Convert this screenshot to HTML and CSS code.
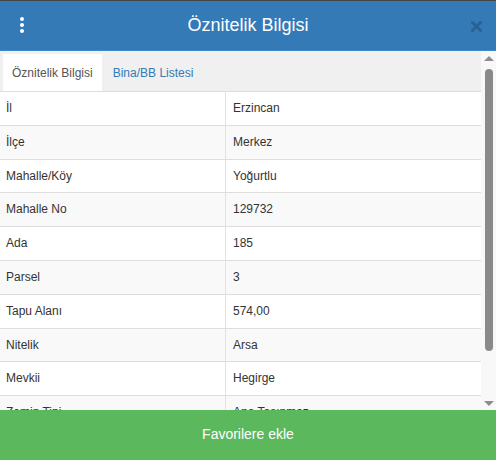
FILE: index.html
```html
<!DOCTYPE html>
<html lang="tr">
<head>
<meta charset="utf-8">
<title>Öznitelik Bilgisi</title>
<link rel="stylesheet" href="styles.css">
</head>
<body>
<div class="dialog">
  <header class="header">
    <div class="menu">
      <svg width="4" height="16" viewBox="0 0 4 16"><circle cx="2" cy="2" r="2" fill="#fff"/><circle cx="2" cy="8" r="2" fill="#fff"/><circle cx="2" cy="14" r="2" fill="#fff"/></svg>
    </div>
    <h1 class="title">Öznitelik Bilgisi</h1>
    <div class="close">
      <svg width="11" height="11" viewBox="0 0 11 11"><path d="M1.5 1.5 L9.5 9.5 M9.5 1.5 L1.5 9.5" stroke="#2a6192" stroke-width="3" stroke-linecap="square"/></svg>
    </div>
  </header>
  <div class="body">
    <div class="content">
      <nav class="tabs">
        <div class="tab active">Öznitelik Bilgisi</div>
        <div class="tab">Bina/BB Listesi</div>
      </nav>
      <table class="attrs">
        <tbody>
          <tr><td class="key">İl</td><td>Erzincan</td></tr>
          <tr><td class="key">İlçe</td><td>Merkez</td></tr>
          <tr><td class="key">Mahalle/Köy</td><td>Yoğurtlu</td></tr>
          <tr><td class="key">Mahalle No</td><td>129732</td></tr>
          <tr><td class="key">Ada</td><td>185</td></tr>
          <tr><td class="key">Parsel</td><td>3</td></tr>
          <tr><td class="key">Tapu Alanı</td><td>574,00</td></tr>
          <tr><td class="key">Nitelik</td><td>Arsa</td></tr>
          <tr><td class="key">Mevkii</td><td>Hegirge</td></tr>
          <tr><td class="key">Zemin Tipi</td><td>Ana Taşınmaz</td></tr>
          <tr><td class="key">Pafta</td><td>-</td></tr>
        </tbody>
      </table>
    </div>
    <div class="scrollbar">
      <div class="arrow up"></div>
      <div class="track"><div class="thumb"></div></div>
      <div class="arrow down"></div>
    </div>
  </div>
  <button class="fav">Favorilere ekle</button>
</div>
</body>
</html>
```
FILE: styles.css
```css
html, body {
  margin: 0;
  padding: 0;
  overflow: hidden;
}
body {
  font-family: "Liberation Sans", Arial, sans-serif;
  font-size: 12px;
  color: #333;
  background: #fff;
}
.dialog {
  width: 496px;
  height: 460px;
  display: flex;
  flex-direction: column;
}
.header {
  flex: 0 0 auto;
  height: 49px;
  border-top: 1px solid #444;
  border-bottom: 1px solid #3f86c4;
  background: #337ab7;
  display: grid;
  grid-template-columns: 44px 1fr 44px;
  align-items: center;
}
.menu {
  display: flex;
  justify-content: center;
  padding-bottom: 1px;
}
.menu svg, .close svg { display: block; }
.title {
  margin: 0;
  text-align: center;
  color: #fff;
  font-size: 18px;
  font-weight: normal;
  line-height: 20px;
  padding-bottom: 2px;
}
.close {
  display: flex;
  justify-content: flex-end;
  padding-right: 14px;
  padding-top: 2px;
}
.body {
  flex: 1 1 auto;
  display: flex;
  min-height: 0;
}
.content {
  flex: 1 1 auto;
  overflow: hidden;
}
.tabs {
  display: flex;
  background: #f0f0f0;
  padding: 3px 0 0 3px;
}
.tab {
  padding: 11px 9px 9px;
  line-height: 17px;
  color: #337ab7;
  margin-right: 2px;
}
.tab.active {
  background: #fff;
  color: #555;
}
.attrs {
  width: 100%;
  border-collapse: collapse;
  table-layout: fixed;
}
.attrs td {
  border-top: 1px solid #ddd;
  padding: 8px 6px 8px 6px;
  line-height: 16.8px;
  vertical-align: top;
  white-space: nowrap;
}
.attrs td.key {
  width: 213px;
  border-right: 1px solid #e2e2e2;
}
.attrs td + td { padding-left: 7px; }
.attrs tr:nth-child(even) td { background: #f9f9f9; }
.scrollbar {
  flex: 0 0 15px;
  background: #f8f8f8;
  display: flex;
  flex-direction: column;
  align-items: center;
}
.arrow {
  width: 0;
  height: 0;
  border-left: 5px solid transparent;
  border-right: 5px solid transparent;
  flex: 0 0 auto;
}
.arrow.up {
  border-bottom: 5px solid #8d8d8d;
  margin-top: 5px;
}
.arrow.down {
  border-top: 5px solid #8d8d8d;
  margin-bottom: 4px;
}
.track {
  flex: 1 1 auto;
  width: 100%;
  display: flex;
  justify-content: center;
  padding: 8px 0 0;
}
.thumb {
  width: 8px;
  height: 282px;
  border-radius: 4px;
  background: #8a8a8a;
}
.fav {
  flex: 0 0 50px;
  height: 50px;
  border: none;
  margin: 0;
  background: #5cb85c;
  color: #fff;
  font-family: "Liberation Sans", Arial, sans-serif;
  font-size: 14px;
  padding: 0 0 2px;
}
```
